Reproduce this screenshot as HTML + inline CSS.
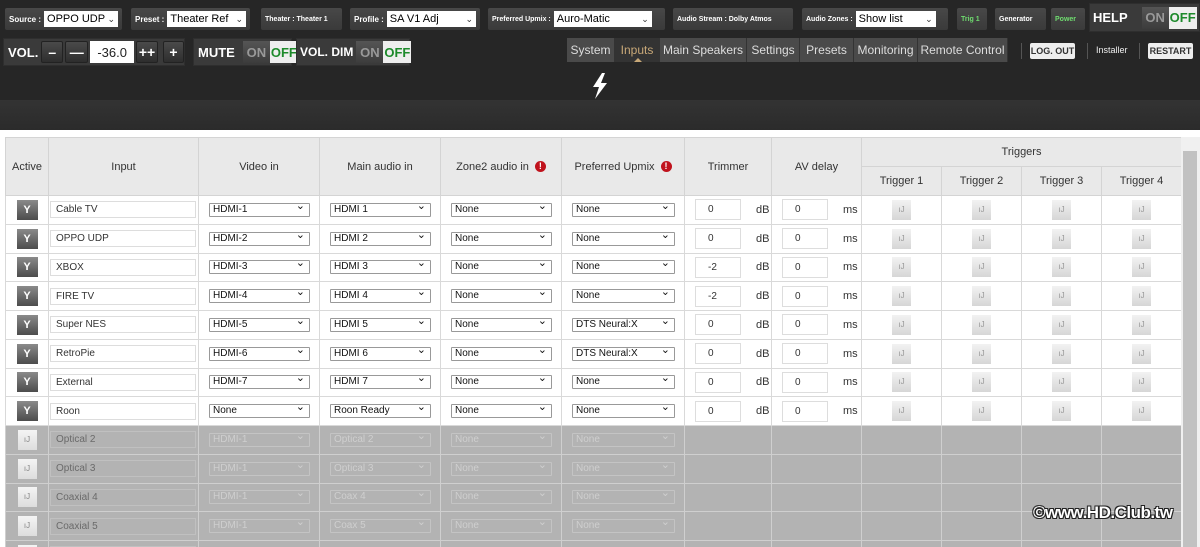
<!DOCTYPE html>
<html><head><meta charset="utf-8"><style>
*{box-sizing:border-box;margin:0;padding:0}
html,body{width:1200px;height:547px;overflow:hidden}
body{background:#fff;font-family:"Liberation Sans",Arial,sans-serif;position:relative}
.top{position:absolute;left:0;top:0;width:1200px;height:100px;background:#262626}
.band{position:absolute;left:0;top:100px;width:1200px;height:30px;background:linear-gradient(#333,#2b2b2b)}
.box{position:absolute;background:linear-gradient(#484848,#3a3a3a);border-radius:2px;color:#fff;font-size:8px;font-weight:bold;display:flex;align-items:center;padding:0 4px;white-space:nowrap}
.dd{background:#fff;color:#000;font-size:11px;font-weight:normal;height:16px;margin-left:3px;padding:0 3px;display:flex;align-items:center;justify-content:space-between;position:relative;overflow:hidden}
.dd i{font-style:normal;font-size:9px;color:#333}
.vb{position:absolute;background:#3a3a3a;border:1px solid #2e2e2e;display:flex;align-items:center;color:#fff;font-weight:bold;font-size:13px;white-space:nowrap}
.btn{background:linear-gradient(#4a4a4a,#2e2e2e);border:1px solid #222;border-radius:2px;height:22px;display:flex;align-items:center;justify-content:center;color:#fff;font-size:14px;font-weight:bold}
.tog{display:flex;height:22px;margin-left:5px;font-size:13px;font-weight:bold}
.tog .on{background:linear-gradient(#555,#3c3c3c);color:#999;width:27px;display:flex;align-items:center;justify-content:center}
.tog .off{background:#eee;color:#1d8a2b;width:28px;display:flex;align-items:center;justify-content:center}
.tab{position:absolute;top:38px;height:24px;background:#4a4a4a;color:#ddd;font-size:12px;display:flex;align-items:center;justify-content:center;border-right:1px solid #333;white-space:nowrap}
.wb{position:absolute;top:43px;height:16px;background:#eee;border-radius:2px;color:#333;font-size:9px;font-weight:bold;display:flex;align-items:center;justify-content:center}
table{position:absolute;left:5px;top:137px;border-collapse:collapse;table-layout:fixed;width:1176px;font-size:11px;color:#333}
th{background:#e9e9e9;font-weight:normal;font-size:11px;color:#333;border:1px solid #d4d4d4;height:29px}
td{border:1px solid #d9d9d9;height:28.75px;text-align:center;vertical-align:middle;padding:0;overflow:hidden}
.y{display:inline-block;width:21px;height:20px;background:linear-gradient(#8a8a8a,#4c4c4c);color:#fff;font-weight:bold;font-size:11px;line-height:20px;vertical-align:middle}
.inp{margin:0 2px 0 1px;height:17px;border:1px solid #ddd;text-align:left;padding-left:5px;font-size:10px;line-height:15px;color:#333}
.sel{margin:0 9px 0 10px;height:14px;border:1px solid #999;border-radius:1px;text-align:left;padding-left:3px;font-size:10px;line-height:12px;color:#111;position:relative}
.sel:after{content:"⌄";position:absolute;right:4px;top:-4px;font-size:11px}
.tr{text-align:left;white-space:nowrap}
.num{display:inline-block;width:46px;height:21px;border:1px solid #ddd;margin-left:10px;font-size:10px;line-height:19px;padding-left:12px;vertical-align:middle}
.tr b{display:inline-block;margin-left:15px;font-size:11px;font-weight:normal;color:#333;vertical-align:middle}
.tg{display:inline-block;width:19px;height:20px;background:linear-gradient(#f2f2f2,#d6d6d6);color:#999;font-size:8px;line-height:20px;vertical-align:middle}
tr.g td{background:#b3b3b3;border-color:#cfcfcf}
tr.g .inp{border-color:#c0c0c0;color:#6a6a6a}
tr.g .sel{border-color:#c4c4c4;color:#cfcfcf}
tr.g .sel:after{color:#cfcfcf}
tr.g .tg{color:#888;background:linear-gradient(#f4f4f4,#ddd)}
.ex{display:inline-block;width:11px;height:11px;border-radius:50%;background:#c0121c;color:#fff;font-size:9px;font-weight:bold;line-height:11px;margin-left:6px;vertical-align:middle}
.wm{position:absolute;left:1033px;top:503px;font-size:17px;font-weight:bold;color:#fff;letter-spacing:-0.5px;text-shadow:-1px -1px 0 #222,1px -1px 0 #222,-1px 1px 0 #222,1px 1px 0 #222}
.sb{position:absolute;left:1181px;top:137px;width:19px;height:410px;background:#f0f0f0}
.sb div{position:absolute;left:2px;top:14px;width:14px;height:396px;background:#c1c1c1}
</style></head><body>
<div class="top"></div><div class="band"></div>
<div class="box" style="left:5px;top:8px;width:117px;height:22px">Source :<div class="dd" style="width:75px">OPPO UDP <i>⌄</i></div></div>
<div class="box" style="left:131px;top:8px;width:119px;height:22px">Preset :<div class="dd" style="width:79px">Theater Ref <i>⌄</i></div></div>
<div class="box" style="left:261px;top:8px;width:81px;height:22px;font-size:7px">Theater : Theater 1</div>
<div class="box" style="left:350px;top:8px;width:130px;height:22px">Profile :<div class="dd" style="width:90px">SA V1 Adj <i>⌄</i></div></div>
<div class="box" style="left:488px;top:8px;width:177px;height:22px;font-size:7px">Preferred Upmix :<div class="dd" style="width:98px">Auro-Matic <i>⌄</i></div></div>
<div class="box" style="left:673px;top:8px;width:120px;height:22px;font-size:7px">Audio Stream : Dolby Atmos</div>
<div class="box" style="left:802px;top:8px;width:146px;height:22px;font-size:7px">Audio Zones :<div class="dd" style="width:80px">Show list <i>⌄</i></div></div>
<div class="box" style="left:957px;top:8px;width:30px;height:22px;color:#6fdc6f;font-size:7px">Trig 1</div>
<div class="box" style="left:995px;top:8px;width:51px;height:22px;font-size:7px">Generator</div>
<div class="box" style="left:1051px;top:8px;width:34px;height:22px;color:#6fdc6f;font-size:7px">Power</div>
<div class="vb" style="left:1089px;top:3px;width:111px;height:29px;padding-left:3px">HELP<div class="tog" style="margin-left:14px"><div class="on">ON</div><div class="off">OFF</div></div></div>

<div class="vb" style="left:3px;top:38px;width:182px;height:28px;padding-left:4px">VOL.<div class="btn" style="margin-left:3px;width:22px">–</div><div class="btn" style="margin-left:2px;width:23px">—</div><div style="background:#fff;color:#222;font-weight:normal;width:44px;height:22px;margin-left:2px;display:flex;align-items:center;justify-content:center;font-size:13px">-36.0</div><div class="btn" style="margin-left:2px;width:22px">++</div><div class="btn" style="margin-left:5px;width:21px">+</div></div>
<div class="vb" style="left:193px;top:38px;width:99px;height:28px;padding-left:4px">MUTE<div class="tog" style="margin-left:8px"><div class="on">ON</div><div class="off">OFF</div></div></div>
<div class="vb" style="left:296px;top:38px;width:114px;height:28px;padding-left:3px;font-size:12px">VOL. DIM<div class="tog" style="margin-left:3px"><div class="on">ON</div><div class="off">OFF</div></div></div>

<div class="tab" style="left:567px;width:48px">System</div>
<div class="tab" style="left:615px;width:45px;background:#333;color:#c8a878">Inputs<span style="position:absolute;bottom:0;left:19px;width:0;height:0;border-left:4px solid transparent;border-right:4px solid transparent;border-bottom:4px solid #c8a878"></span></div>
<div class="tab" style="left:660px;width:87px">Main Speakers</div>
<div class="tab" style="left:747px;width:53px">Settings</div>
<div class="tab" style="left:800px;width:54px">Presets</div>
<div class="tab" style="left:854px;width:64px">Monitoring</div>
<div class="tab" style="left:918px;width:90px">Remote Control</div>
<div style="position:absolute;left:1021px;top:43px;width:1px;height:16px;background:#555"></div>
<div class="wb" style="left:1030px;width:45px">LOG. OUT</div>
<div style="position:absolute;left:1087px;top:43px;width:1px;height:16px;background:#555"></div>
<div style="position:absolute;left:1096px;top:45px;color:#eee;font-size:9px">Installer</div>
<div style="position:absolute;left:1139px;top:43px;width:1px;height:16px;background:#555"></div>
<div class="wb" style="left:1148px;width:45px">RESTART</div>
<svg style="position:absolute;left:590px;top:72px" width="20" height="28" viewBox="0 0 20 28"><path d="M12 1 L3 15 L9 15 L5 27 L17 11 L11 11 L15 1 Z" fill="#fff"/></svg>

<table>
<colgroup><col style="width:43px"><col style="width:150px"><col style="width:121px"><col style="width:121px"><col style="width:121px"><col style="width:123px"><col style="width:87px"><col style="width:90px"><col style="width:80px"><col style="width:80px"><col style="width:80px"><col style="width:80px"></colgroup>
<tr><th rowspan="2">Active</th><th rowspan="2">Input</th><th rowspan="2">Video in</th><th rowspan="2">Main audio in</th><th rowspan="2">Zone2 audio in<span class="ex">!</span></th><th rowspan="2">Preferred Upmix<span class="ex">!</span></th><th rowspan="2">Trimmer</th><th rowspan="2">AV delay</th><th colspan="4">Triggers</th></tr>
<tr><th>Trigger 1</th><th>Trigger 2</th><th>Trigger 3</th><th>Trigger 4</th></tr>
<tr><td><span class="y">Y</span></td><td><div class="inp">Cable TV</div></td><td><div class="sel">HDMI-1</div></td><td><div class="sel">HDMI 1</div></td><td><div class="sel">None</div></td><td><div class="sel">None</div></td><td class="tr"><span class="num">0</span><b>dB</b></td><td class="tr"><span class="num">0</span><b>ms</b></td><td><span class="tg">ıJ</span></td><td><span class="tg">ıJ</span></td><td><span class="tg">ıJ</span></td><td><span class="tg">ıJ</span></td></tr>
<tr><td><span class="y">Y</span></td><td><div class="inp">OPPO UDP</div></td><td><div class="sel">HDMI-2</div></td><td><div class="sel">HDMI 2</div></td><td><div class="sel">None</div></td><td><div class="sel">None</div></td><td class="tr"><span class="num">0</span><b>dB</b></td><td class="tr"><span class="num">0</span><b>ms</b></td><td><span class="tg">ıJ</span></td><td><span class="tg">ıJ</span></td><td><span class="tg">ıJ</span></td><td><span class="tg">ıJ</span></td></tr>
<tr><td><span class="y">Y</span></td><td><div class="inp">XBOX</div></td><td><div class="sel">HDMI-3</div></td><td><div class="sel">HDMI 3</div></td><td><div class="sel">None</div></td><td><div class="sel">None</div></td><td class="tr"><span class="num">-2</span><b>dB</b></td><td class="tr"><span class="num">0</span><b>ms</b></td><td><span class="tg">ıJ</span></td><td><span class="tg">ıJ</span></td><td><span class="tg">ıJ</span></td><td><span class="tg">ıJ</span></td></tr>
<tr><td><span class="y">Y</span></td><td><div class="inp">FIRE TV</div></td><td><div class="sel">HDMI-4</div></td><td><div class="sel">HDMI 4</div></td><td><div class="sel">None</div></td><td><div class="sel">None</div></td><td class="tr"><span class="num">-2</span><b>dB</b></td><td class="tr"><span class="num">0</span><b>ms</b></td><td><span class="tg">ıJ</span></td><td><span class="tg">ıJ</span></td><td><span class="tg">ıJ</span></td><td><span class="tg">ıJ</span></td></tr>
<tr><td><span class="y">Y</span></td><td><div class="inp">Super NES</div></td><td><div class="sel">HDMI-5</div></td><td><div class="sel">HDMI 5</div></td><td><div class="sel">None</div></td><td><div class="sel">DTS Neural:X</div></td><td class="tr"><span class="num">0</span><b>dB</b></td><td class="tr"><span class="num">0</span><b>ms</b></td><td><span class="tg">ıJ</span></td><td><span class="tg">ıJ</span></td><td><span class="tg">ıJ</span></td><td><span class="tg">ıJ</span></td></tr>
<tr><td><span class="y">Y</span></td><td><div class="inp">RetroPie</div></td><td><div class="sel">HDMI-6</div></td><td><div class="sel">HDMI 6</div></td><td><div class="sel">None</div></td><td><div class="sel">DTS Neural:X</div></td><td class="tr"><span class="num">0</span><b>dB</b></td><td class="tr"><span class="num">0</span><b>ms</b></td><td><span class="tg">ıJ</span></td><td><span class="tg">ıJ</span></td><td><span class="tg">ıJ</span></td><td><span class="tg">ıJ</span></td></tr>
<tr><td><span class="y">Y</span></td><td><div class="inp">External</div></td><td><div class="sel">HDMI-7</div></td><td><div class="sel">HDMI 7</div></td><td><div class="sel">None</div></td><td><div class="sel">None</div></td><td class="tr"><span class="num">0</span><b>dB</b></td><td class="tr"><span class="num">0</span><b>ms</b></td><td><span class="tg">ıJ</span></td><td><span class="tg">ıJ</span></td><td><span class="tg">ıJ</span></td><td><span class="tg">ıJ</span></td></tr>
<tr><td><span class="y">Y</span></td><td><div class="inp">Roon</div></td><td><div class="sel">None</div></td><td><div class="sel">Roon Ready</div></td><td><div class="sel">None</div></td><td><div class="sel">None</div></td><td class="tr"><span class="num">0</span><b>dB</b></td><td class="tr"><span class="num">0</span><b>ms</b></td><td><span class="tg">ıJ</span></td><td><span class="tg">ıJ</span></td><td><span class="tg">ıJ</span></td><td><span class="tg">ıJ</span></td></tr>
<tr class="g"><td><span class="tg">ıJ</span></td><td><div class="inp">Optical 2</div></td><td><div class="sel">HDMI-1</div></td><td><div class="sel">Optical 2</div></td><td><div class="sel">None</div></td><td><div class="sel">None</div></td><td></td><td></td><td></td><td></td><td></td><td></td></tr>
<tr class="g"><td><span class="tg">ıJ</span></td><td><div class="inp">Optical 3</div></td><td><div class="sel">HDMI-1</div></td><td><div class="sel">Optical 3</div></td><td><div class="sel">None</div></td><td><div class="sel">None</div></td><td></td><td></td><td></td><td></td><td></td><td></td></tr>
<tr class="g"><td><span class="tg">ıJ</span></td><td><div class="inp">Coaxial 4</div></td><td><div class="sel">HDMI-1</div></td><td><div class="sel">Coax 4</div></td><td><div class="sel">None</div></td><td><div class="sel">None</div></td><td></td><td></td><td></td><td></td><td></td><td></td></tr>
<tr class="g"><td><span class="tg">ıJ</span></td><td><div class="inp">Coaxial 5</div></td><td><div class="sel">HDMI-1</div></td><td><div class="sel">Coax 5</div></td><td><div class="sel">None</div></td><td><div class="sel">None</div></td><td></td><td></td><td></td><td></td><td></td><td></td></tr>
<tr class="g"><td><span class="tg">ıJ</span></td><td><div class="inp">&nbsp;</div></td><td></td><td></td><td></td><td></td><td></td><td></td><td></td><td></td><td></td><td></td></tr>
</table>
<div class="sb"><div></div></div>
<div class="wm">©www.HD.Club.tw</div>
</body></html>
